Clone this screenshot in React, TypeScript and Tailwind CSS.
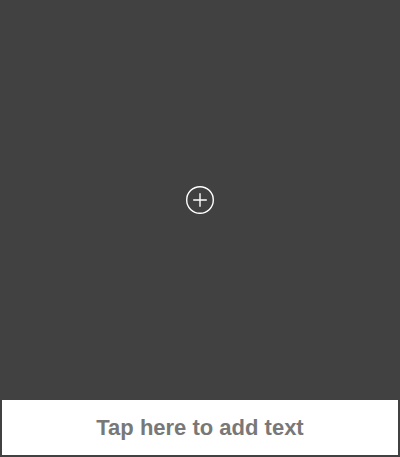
export default function App() {
  return (
    <div className="flex h-[457px] w-[400px] flex-col bg-[#414141] px-[2px] pb-[2px]">
      {/* canvas area */}
      <div className="flex h-[400px] items-center justify-center">
        <button className="flex h-[30px] w-[30px] items-center justify-center">
          <svg viewBox="0 0 30 30" className="h-[30px] w-[30px]" fill="none" stroke="#ffffff" strokeWidth="1.4">
            <circle cx="15" cy="15" r="13.3" />
            <path d="M15 8.2v13.6M8.2 15h13.6" />
          </svg>
        </button>
      </div>

      {/* text input bar */}
      <div className="flex flex-1 items-center justify-center bg-white">
        <span className="font-['Liberation_Sans',Arial,sans-serif] text-[22px] font-bold leading-none text-[#787878]">
          Tap here to add text
        </span>
      </div>
    </div>
  );
}
